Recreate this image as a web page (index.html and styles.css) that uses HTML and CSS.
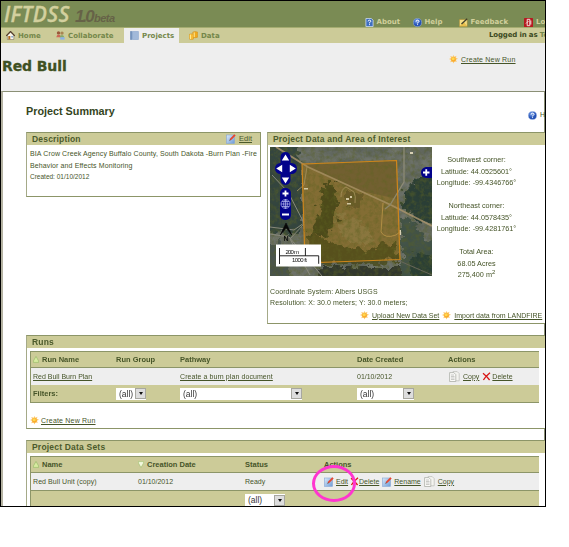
FILE: index.html
```html
<!DOCTYPE html>
<html lang="en">
<head>
<meta charset="utf-8">
<title>Red Bull - IFTDSS</title>
<link rel="stylesheet" href="styles.css">
</head>
<body>
<svg class="defs" width="0" height="0" aria-hidden="true">
  <defs>
    <linearGradient id="gBlue" x1="0" y1="0" x2="1" y2="1"><stop offset="0" stop-color="#dcebfa"/><stop offset="1" stop-color="#6c9ad6"/></linearGradient>
    <radialGradient id="gHelp" cx=".4" cy=".3"><stop offset="0" stop-color="#7fa8ee"/><stop offset="1" stop-color="#2350b4"/></radialGradient>
    <symbol id="sun" viewBox="0 0 9 9"><path d="M4.500 0l.9 1.700 2.100-1-.7 2.100 2.200 1-2.100 1 .9 2.200-2.300-.7-1 2.300-.9-2.200-2.300.9.8-2.300-2.100-1 2.100-1-.8-2 2.300.7z" fill="#fcc76a"/><circle cx="4.500" cy="4.400" r="2.300" fill="#f9a82a"/><circle cx="4.200" cy="3.700" r="1.500" fill="#ffd84e"/></symbol>
    <symbol id="edit" viewBox="0 0 10 10"><rect x=".5" y="1" width="8" height="8.4" fill="url(#gBlue)" stroke="#86a6d4" stroke-width=".6"/><path d="M3.600 6.400l.6-1.800L8.300.3l1.400 1.300-4.200 4.200z" fill="#e8452f"/><path d="M3.200 6.900l.8-1.600.8.8z" fill="#555"/></symbol>
    <symbol id="del" viewBox="0 0 9 9"><path d="M1 1.2Q4 3.5 7.6 8M8 .8Q4 4 1.4 8" fill="none" stroke="#d81414" stroke-width="1.35"/></symbol>
    <symbol id="copy" viewBox="0 0 11 11"><path d="M4 .6h4.2l2 2v7.2H4z" fill="#f4f4f0" stroke="#b9bab4" stroke-width=".7"/><path d="M.6 1.6h4.2l2 2v6.9H.6z" fill="#fafaf8" stroke="#a4a69f" stroke-width=".7"/><path d="M2 4h3M2 5.5h3.5M2 7h3.5M2 8.5h3.5" stroke="#a8aaa5" stroke-width=".6"/></symbol>
    <symbol id="help" viewBox="0 0 9 9"><circle cx="4.5" cy="4.5" r="4.1" fill="url(#gHelp)" stroke="#9ab4e4" stroke-width=".5"/><path d="M3.1 3.6Q3.1 2.2 4.6 2.2T6 3.5Q5.9 4.2 4.6 4.7v.7M4.6 6.2v.9" fill="none" stroke="#fff" stroke-width="1"/></symbol>
    <symbol id="up" viewBox="0 0 6 7"><path d="M3 .4L5.6 5v1.4H.4V5z" fill="#d7eba0" stroke="#91b763" stroke-width=".6"/></symbol>
    <symbol id="down" viewBox="0 0 6 7"><path d="M3 6.6L5.6 2V.6H.4V2z" fill="#f2f8dd" stroke="#9cbf6c" stroke-width=".6"/></symbol>
  </defs>
</svg>

<div class="window">
  <header class="banner">
    <div class="logo"><span class="name">IFTDSS</span><span class="ver">1.0</span><span class="beta">beta</span></div>
    <nav class="toplinks">
      <span class="item about"><svg class="ic" viewBox="0 0 9 10"><path d="M.5.5h6l2 2v7h-8z" fill="#3f6fc0" stroke="#cfdcf2" stroke-width=".9"/><path d="M3 3.8Q3.1 2.4 4.5 2.4T5.9 3.7Q5.8 4.6 4.5 5.1v.8M4.5 6.9v1" fill="none" stroke="#fff" stroke-width="1.1"/></svg><b>About</b></span>
      <span class="item tophelp"><svg class="ic"><use href="#help"/></svg><b>Help</b></span>
      <span class="item feedback"><svg class="ic" viewBox="0 0 9 9"><path d="M.3 1.4h8v7H.3z" fill="#f4df86" stroke="#9b812e" stroke-width=".6"/><path d="M.4 8.3L5 4l3.2 4.2z" fill="#e8bf4c"/><path d="M2.5 6L8.2.7" stroke="#42422c" stroke-width="1.4"/></svg><b>Feedback</b></span>
      <span class="item logout"><svg class="ic" viewBox="0 0 9 9"><rect width="9" height="9" rx=".6" fill="#b51a20"/><path d="M3.200 1.300v6.400h2.600V1.300zM6.800 2.500v4M2 5.500L4.500 3" fill="none" stroke="#f5dcdc" stroke-width="1"/></svg><b>Lo</b></span>
    </nav>
  </header>

  <nav class="menu">
    <span class="item home"><svg class="ic" viewBox="0 0 9 9"><path d="M1.4 4v4.5h6.4V4L4.6 1z" fill="#f9f6ec" stroke="#6b6254" stroke-width=".5"/><path d="M.2 4.9L4.5.5l4.3 4.4" fill="none" stroke="#543e2c" stroke-width="1.3"/><path d="M2.3 5h2v3.4h-2z" fill="#b06a22"/><path d="M5.3 5h1.6v1.5H5.3z" fill="#7ba2ce"/></svg><b>Home</b></span>
    <span class="item collab"><svg class="ic" viewBox="0 0 9 9"><circle cx="2.5" cy="1.9" r="1.7" fill="#99593a"/><circle cx="6" cy="2.1" r="1.7" fill="#a88452"/><path d="M.3 6.3Q.6 3.5 2.7 3.5T5 6.3z" fill="#cd6756"/><path d="M3.7 6.5Q4 4 6 4t2.4 2.5z" fill="#86a868"/><path d="M4.2 6.3h4.4v2.3H4.2z" fill="#8ab1e8"/></svg><b>Collaborate</b></span>
    <span class="item projects"><svg class="ic" viewBox="0 0 9 9"><rect x=".3" y=".2" width="8.4" height="8.6" fill="#8eaace"/><path d="M1 .2v8.6" stroke="#5c7eac"/><path d="M2.7.7h5.6v7.5H2.7z" fill="#a1b9d9"/></svg><b>Projects</b></span>
    <span class="item data"><svg class="ic" viewBox="0 0 9 9"><path d="M3.8 1Q6 0 8.6 1v5.2Q6 7.3 3.8 6.2z" fill="#efa91e" stroke="#c98312" stroke-width=".4"/><path d="M.3 3.3q2-1 4.2 0v4.8q-2 1-4.2 0z" fill="#f7bb35" stroke="#c98312" stroke-width=".4"/><path d="M5.2 1.4v4.7M1.4 3.6v4.5" stroke="#ffef9c"/></svg><b>Data</b></span>
    <span class="who"><b>Logged in as</b> <b class="user">Te</b></span>
  </nav>

  <div class="titlebar">
    <h1>Red Bull</h1>
    <a class="link newrun"><svg class="sun"><use href="#sun"/></svg><u class="create">Create New Run</u></a>
  </div>

  <main class="sheet">
    <div class="summary"><h2>Project Summary</h2><span class="h"><svg class="ic"><use href="#help"/></svg>H</span></div>

    <div class="columns">
      <section class="panel description">
        <h3 class="bar"><span>Description</span><a class="link"><svg class="edit"><use href="#edit"/></svg><u>Edit</u></a></h3>
        <div class="text">
          <p>BIA Crow Creek Agency Buffalo County, South Dakota -Burn Plan -Fire</p>
          <p>Behavior and Effects Monitoring</p>
          <p class="created">Created: 01/10/2012</p>
        </div>
      </section>

      <section class="panel aoi">
        <h3 class="bar"><span>Project Data and Area of Interest</span></h3>
        <div class="mapline">
          <svg class="map" viewBox="0 0 162 129">
            <defs>
              <filter id="land" x="0" y="0" width="1" height="1"><feTurbulence type="fractalNoise" baseFrequency=".07 .09" numOctaves="5" seed="8"/><feColorMatrix values=".5 .3 0 0 -.1  .45 .3 0 0 -.06  .35 .3 0 0 -.08  0 0 0 0 1"/></filter>
              <filter id="fine" x="0" y="0" width="1" height="1"><feTurbulence type="fractalNoise" baseFrequency=".22" numOctaves="4" seed="4"/><feColorMatrix values="0 0 0 0 .1  0 0 0 0 .12  0 0 0 0 .02  2.6 0 0 0 -1.05"/></filter>
              <filter id="rough" filterUnits="userSpaceOnUse" x="-20" y="-20" width="202" height="169"><feTurbulence type="fractalNoise" baseFrequency=".13" numOctaves="3" seed="3" result="n"/><feDisplacementMap in="SourceGraphic" in2="n" scale="16" xChannelSelector="R" yChannelSelector="G"/><feGaussianBlur stdDeviation=".5"/></filter>
            </defs>
            <rect width="162" height="129" fill="#565c56"/>
            <rect width="162" height="129" filter="url(#land)" opacity=".3"/>
            <g filter="url(#rough)">
              <path d="M-10-10h30l14 25v68L18 88l-28-4z" fill="#263c35" opacity=".8"/>
              <path d="M-10 95h20l14 44h-34z" fill="#3d4a43" opacity=".7"/>
              <path d="M134 46l12-14 26-14v62l-22-7-16-10z" fill="#1d352f" opacity=".85"/>
              <path d="M132 72l14 4 10 18 20 4v41h-46l2-25z" fill="#364b3e" opacity=".75"/>
              <path d="M138 112l14-6 20 6v26h-24z" fill="#263b32" opacity=".8"/>
              <path d="M50 120h80l12 9v10H52z" fill="#33382f"/>
            </g>
            <path d="M32 17L127 13l3 100-95 3z" fill="#806c3a"/>
            <path d="M34 18l92-4 2 38L82 42z" fill="#6e5e37"/>
            <g filter="url(#rough)">
              <path d="M54 38h10l4 15-3 26-13 11-13-2 8-18z" fill="#3b401b" opacity=".85"/>
              <path d="M37 86l20 7 22 8 18 3 30-10 3 21-92 3z" fill="#44461d" opacity=".8"/>
              <path d="M76 42l16 5-3 14-13-1z" fill="#574d2a" opacity=".6"/>
              <path d="M67 68l22 6 15 16-13 9-19-9z" fill="#8e7d4c" opacity=".65"/>
            </g>
            <rect width="162" height="129" filter="url(#fine)" opacity=".5"/>
            <g fill="none">
              <path d="M6 0L38 20 121 58 162 79" stroke="#a8936c" stroke-width="1.900" opacity=".85"/>
              <path d="M134 0v35l-14 23-5 4" stroke="#8d8a76" stroke-width="1.3"/>
              <path d="M113 56l-2 29q4 7 15 3l5-4" stroke="#b2914c" stroke-width="1"/>
              <path d="M0 80l24 3 10-7M34 76L18 45 2 28M34 77L20 92l20 36M0 87l19 3 33 39" stroke="#88887a" stroke-width="1"/>
              <path d="M37 20l-3 18-7 6M71 50q0-8 5-10l8 5q2 4 1 11" stroke="#a39162" stroke-width=".9"/>
              <path d="M125 112l37 16" stroke="#67665a"/>
            </g>
            <path d="M76 51h3v2h-3zM80 49h2v2h-2zM77 56h4v1.5h-4zM129.5 83h1.5v5h-1.5zM140 5h3v2h-3zM34 41h4v1.5h-4z" fill="#d9d1b4"/>
            <path d="M32 17L126.500 13.500 130 112.500 35 116z" fill="#9a7300" fill-opacity=".1" stroke="#cf861b" stroke-width="1.2"/>
            <g fill="#02028b"><rect x="10.5" y="5" width="10" height="33" rx="5"/><rect x="5" y="16" width="22" height="11" rx="5.500"/><rect x="10" y="41" width="11" height="32" rx="5"/><path d="M162 20h-6q-5 1-5 5.500t5 5.500h6z"/></g>
            <path d="M15.500 7.500l3.700 6h-7.400zM15.500 36.500l3.700-6h-7.400zM6.200 21.500l6-3.700v7.400zM25.800 21.500l-6-3.700v7.400z" fill="#fff"/>
            <path d="M12.500 46.500h6M15.500 43.500v6M12 67.500h7M153 25.500h6.500M156.250 22.300v6.500" stroke="#fff" stroke-width="1.8"/>
            <path d="M20 57a4.500 4.500 0 1 1-9 0 4.500 4.500 0 0 1 9 0M15.500 52.500v9M11 57h9M12 54.500h7M12 59.500h7M15.500 52.500q-4 4.500 0 9 4-4.500 0-9" fill="none" stroke="#b8baf0" stroke-width=".7"/>
            <path d="M16 76l5.800 12-5.600-7-6 7z" fill="#070707" stroke="#070707" stroke-width=".6"/><text x="13.500" y="94" class="north">N</text>
            <rect x="6" y="97.500" width="45" height="22" fill="#fff"/>
            <path d="M9.500 101v16M9.500 108.800h39.200v8M35.400 101v8" fill="none" stroke="#222" stroke-width="1"/>
            <text x="15.500" y="107" class="scale" textLength="13.500">200 m</text><text x="22" y="115.200" class="scale" textLength="15">1000 ft</text>
          </svg>
          <div class="coords">
            <p>Southwest corner:</p><p>Latitude: 44.0525601°</p><p>Longitude: -99.4346766°</p>
            <p class="gap">Northeast corner:</p><p>Latitude: 44.0578435°</p><p>Longitude: -99.4281761°</p>
            <p class="gap">Total Area:</p><p>68.05 Acres</p><p>275,400 m<sup>2</sup></p>
          </div>
        </div>
        <p class="cs">Coordinate System: Albers USGS</p>
        <p class="res">Resolution: X: 30.0 meters; Y: 30.0 meters;</p>
        <div class="datalinks"><a class="link"><svg class="sun"><use href="#sun"/></svg><u>Upload New Data Set</u></a><a class="link"><svg class="sun"><use href="#sun"/></svg><u>Import data from LANDFIRE</u></a></div>
      </section>
    </div>

    <section class="panel runs">
      <h3 class="bar"><span>Runs</span></h3>
      <div class="table">
        <div class="row head"><span><svg class="sort"><use href="#up"/></svg>Run Name</span><span>Run Group</span><span>Pathway</span><span>Date Created</span><span>Actions</span></div>
        <div class="row body"><span><u>Red Bull Burn Plan</u></span><span></span><span><u class="path">Create a burn plan document</u></span><span>01/10/2012</span><span class="acts"><svg class="copy"><use href="#copy"/></svg><u>Copy</u><svg class="del"><use href="#del"/></svg><u>Delete</u></span></div>
        <div class="row foot"><span>Filters:</span><span><span class="select s1">(all)<i></i></span></span><span><span class="select s2">(all)<i></i></span></span><span><span class="select s3">(all)<i></i></span></span><span></span></div>
      </div>
      <a class="link below"><svg class="sun"><use href="#sun"/></svg><u class="create">Create New Run</u></a>
    </section>

    <section class="panel sets">
      <h3 class="bar"><span class="t-sets">Project Data Sets</span></h3>
      <div class="table">
        <div class="row head"><span><svg class="sort"><use href="#up"/></svg>Name</span><span><svg class="sort"><use href="#down"/></svg>Creation Date</span><span>Status</span><span>Actions</span></div>
        <div class="row body"><span class="unit">Red Bull Unit (copy)</span><span>01/10/2012</span><span>Ready</span><span class="acts"><span class="marked"><svg class="edit"><use href="#edit"/></svg><u>Edit</u><span class="ring"></span></span><svg class="del"><use href="#del"/></svg><u>Delete</u><svg class="edit"><use href="#edit"/></svg><u>Rename</u><svg class="copy"><use href="#copy"/></svg><u>Copy</u></span></div>
        <div class="row foot"><span></span><span></span><span><span class="select s4">(all)<i></i></span></span><span></span></div>
      </div>
    </section>
  </main>
</div>
</body>
</html>
```
FILE: styles.css
```css
* { box-sizing: border-box; }
body { margin: 0; background: #fff; color: #465529; font: 7px/11.5px "Liberation Sans", Arial, sans-serif; overflow: hidden; }
h1, h2, h3, p { margin: 0; }
u { text-decoration: underline; text-decoration-thickness: .7px; text-underline-offset: 1px; }
svg { display: block; flex: none; }
.defs { position: absolute; }
.window { width: 546px; height: 507px; border: 1px solid #000; background: #eee; overflow: hidden; white-space: nowrap; }

.banner { height: 27px; background: #7a8b54; border-bottom: 1px solid #a4ac70; display: flex; justify-content: space-between; }
.logo { display: flex; align-items: baseline; padding-left: 3px; font-style: italic; line-height: 27px; }
.logo .name { width: 71px; font-family: "Open Sans", sans-serif; font-weight: 600; font-size: 21px; letter-spacing: .4px; color: #d3d09e; -webkit-text-stroke: .3px #d3d09e; }
.logo .ver { width: 19px; font-size: 17px; font-weight: bold; letter-spacing: -2px; color: #666247; }
.logo .beta { font-size: 11px; font-weight: bold; letter-spacing: -.5px; color: #666247; }
.toplinks { display: flex; width: 180px; padding-top: 16px; height: 27px; color: #d2d09c; }
.item { display: flex; align-items: center; flex: none; gap: 2.500px; height: 10px; font: bold 7px/10px "DejaVu Sans", sans-serif; }
.ic { width: 9px; height: 9px; }
.about { width: 48px; }
.tophelp { width: 46px; }
.feedback { width: 65px; }
.logout { gap: 3px; }

.menu { height: 15px; background: #cccb98; color: #74874a; display: flex; align-items: center; padding-left: 5px; }
.menu .item { height: 15px; }
.home { width: 50px; gap: 3px; }
.collab { width: 68px; gap: 3px; }
.menu .projects { width: 55px; padding-left: 6px; background: #eee; gap: 3px; margin-right: 10px; }
.menu .data { gap: 3px; }
.who { margin-left: auto; width: 56px; font: bold 7px/15px "DejaVu Sans", sans-serif; letter-spacing: -.15px; color: #3c4a22; }
.who .user { color: #74874a; }

.titlebar { height: 48px; display: flex; justify-content: space-between; }
h1 { font: bold 14px/20px "DejaVu Sans", sans-serif; color: #3f5122; padding: 13px 0 0 1px; letter-spacing: -.1px; -webkit-text-stroke: .3px #3f5122; }
.link { display: flex; align-items: center; gap: 3px; height: 11px; }
.create { letter-spacing: .2px; }
.newrun { width: 96px; margin-top: 11px; gap: 3px; }
.sun { width: 9px; height: 9px; }
.edit { width: 10px; height: 10px; }

.sheet { background: #fff; border: 1px solid #8b9076; border-left: 2px solid #b5b3a2; height: 430px; padding-left: 23px; }
.summary { display: flex; justify-content: space-between; height: 40px; padding-top: 12px; }
h2 { font: bold 10.8px/15px "Liberation Sans", sans-serif; color: #34451d; }
.summary .h { display: flex; align-items: center; gap: 3px; width: 16px; height: 12px; margin-top: 5px; }
.columns { display: flex; align-items: flex-start; gap: 6px; height: 203px; }
.panel { border: 1px solid #8c9568; border-left: 1.5px solid #a5aa88; background: #fff; }
.bar { height: 12px; background: #cccb98; display: flex; justify-content: space-between; padding: 0 8px 0 5px; font: bold 8.5px/12px "Liberation Sans", sans-serif; letter-spacing: .18px; color: #4b5a2b; }
.t-sets { letter-spacing: .2px; }
.bar .link { font: 7.5px/11px "Liberation Sans", sans-serif; letter-spacing: 0; }
.description { width: 235px; height: 65px; flex: none; }
.text { padding: 3px 3px 0; letter-spacing: .11px; }
.created { font-size: 6.500px; letter-spacing: 0; }
.aoi { width: 300px; height: 192px; flex: none; }
.mapline { display: flex; padding: 2px 0 0 2px; }
.map { width: 162px; height: 129px; }
.coords { width: 89px; text-align: center; padding-top: 7px; font-size: 7.250px; }
.coords .gap { margin-top: 11.500px; }
sup { font-size: 6px; line-height: 0; }
.north { font: bold 7px "Liberation Sans", sans-serif; fill: #111; }
.scale { font: 6px "Liberation Sans", sans-serif; fill: #111; }
.cs { margin: 5px 0 0 2px; letter-spacing: .1px; }
.res { margin-left: 2px; letter-spacing: .1px; }
.datalinks { display: flex; gap: 3px; padding: 1px 0 0 92px; }
.datalinks .link { height: 12px; gap: 3px; }

.runs { width: 560px; height: 94px; }
.sets { width: 560px; height: 100px; margin-top: 11px; }
.table { width: 509px; margin: 3px 0 0 3px; border: 1px solid #8c9568; border-right: 0; border-top-width: 1.5px; }
.row { display: grid; grid-template-columns: 83px 64px 177px 91px 1fr; align-items: center; padding-left: 2px; height: 17px; background: #cccb98; font-size: 7px; }
.row > span { display: flex; align-items: center; }
.head, .foot { font-weight: bold; font-size: 7.500px; }
.row.head { border-bottom: 1px solid #8c9568; height: 16px; }
.row.body { background: #eee; }
.path { letter-spacing: .08px; }
.unit { letter-spacing: .07px; }
.sort { width: 6px; height: 7px; margin-right: 3px; }
.sets .row { grid-template-columns: 105px 107px 79px 1fr; }
.sets .foot { border-top: 1px solid #8c9568; height: 19px; }
.select { display: flex; justify-content: space-between; align-items: center; height: 12px; background: #fff; color: #333; font: 8.5px/12px "Liberation Sans", sans-serif; padding-left: 3px; }
.select i { width: 11px; height: 11px; border: 1px solid #a7a7a0; background: #ddd; display: flex; align-items: center; justify-content: center; }
.select i::after { content: ""; border: 2.5px solid transparent; border-top: 3px solid #111; border-bottom: 0; }
.s1 { width: 30px; }
.s2 { width: 122px; }
.s3 { width: 57px; }
.s4 { width: 40px; }
.copy { width: 11px; height: 11px; margin-right: 2px; }
.del { width: 9px; height: 9px; margin: 0 1px 0 3px; }
.runs .copy { margin: 0 3px 0 1px; }
.acts .edit { margin-right: 2px; }
.acts u + .edit, .acts u + .copy { margin-left: 3px; }
.sets .acts u + .copy { margin: 0 3px; }
.acts .marked + .del { margin: 0 0 0 2px; }
.below { margin: 12px 0 0 3px; gap: 2px; }
.marked { display: flex; align-items: center; position: relative; }
.ring { position: absolute; left: -12px; top: -11px; width: 44px; height: 37px; border: 3px solid #ff35cf; border-radius: 50%; }
```
